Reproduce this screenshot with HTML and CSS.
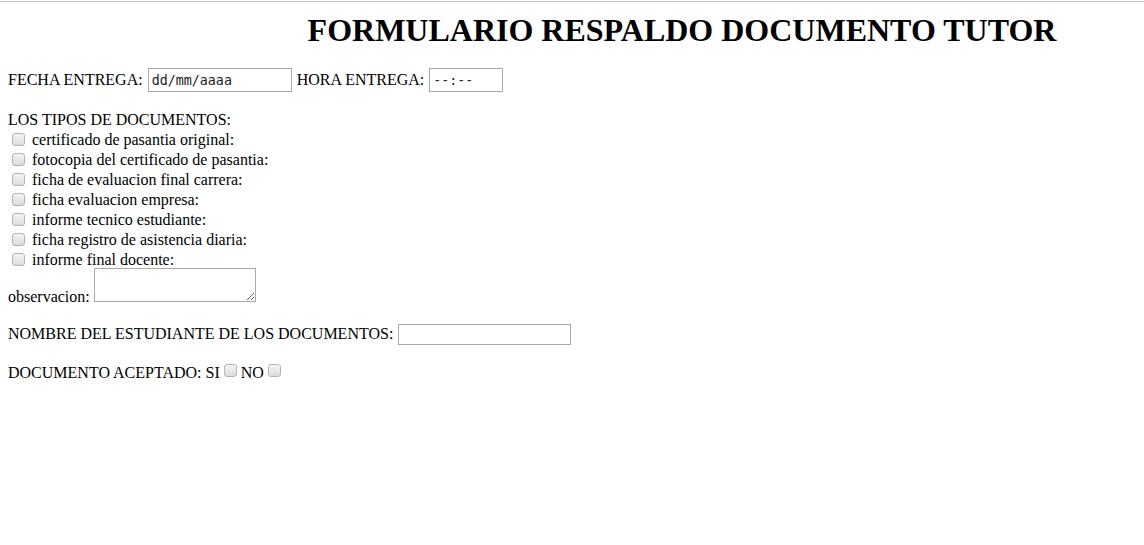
FILE: index.html
```html
<!DOCTYPE html>
<html lang="es">
<head>
<meta charset="utf-8">
<title>Formulario</title>
<link rel="stylesheet" href="styles.css">
</head>
<body>
<div class="topline"></div>
<form class="page">
<h1 class="title">FORMULARIO RESPALDO DOCUMENTO TUTOR</h1>
<p class="row first">FECHA ENTREGA: <input class="field date" type="text" placeholder="dd/mm/aaaa"> HORA ENTREGA: <input class="field time" type="text" placeholder="--:--"></p>
<div class="docs">
LOS TIPOS DE DOCUMENTOS:<br>
<input class="chk" type="checkbox"> certificado de pasantia original:<br>
<input class="chk" type="checkbox"> fotocopia del certificado de pasantia:<br>
<input class="chk" type="checkbox"> ficha de evaluacion final carrera:<br>
<input class="chk" type="checkbox"> ficha evaluacion empresa:<br>
<input class="chk" type="checkbox"> informe tecnico estudiante:<br>
<input class="chk" type="checkbox"> ficha registro de asistencia diaria:<br>
<input class="chk" type="checkbox"> informe final docente:<br>
<span class="obsline">observacion: <textarea class="obs"></textarea></span>
</div>
<p class="row name-row">NOMBRE DEL ESTUDIANTE DE LOS DOCUMENTOS: <input class="field name" type="text"></p>
<p class="row accept-row">DOCUMENTO ACEPTADO: SI <input class="chk small" type="checkbox"> NO <input class="chk small" type="checkbox"></p>
</form>
</body>
</html>
```
FILE: styles.css
```css
html, body {
  margin: 0;
  background: #fff;
}
body {
  font-family: "Liberation Serif", "Times New Roman", serif;
  font-size: 16px;
  color: #000;
}
.topline {
  height: 1px;
  margin-top: 1px;
  background: #c4c4c4;
}
.page {
  padding: 0 8px;
}
.title {
  margin: 10px 0 0;
  padding-left: 220px;
  text-align: center;
  font-size: 32px;
  font-weight: bold;
}
.row {
  margin: 18px 0;
}
.row.first {
  margin-top: 19px;
}
.row.name-row {
  margin-top: 17px;
}
.row.accept-row {
  margin-top: 19px;
}
.field {
  font: 13.33px "DejaVu Sans Mono", "Liberation Mono", monospace;
  border: 1px solid #a9a9a9;
  border-radius: 0;
  padding: 2px 3px;
  margin: 0 0 0 1px;
  height: 24px;
  box-sizing: border-box;
  vertical-align: baseline;
  background: #fff;
}
.field::placeholder {
  color: #222;
  opacity: 1;
}
.date {
  width: 144px;
  margin-right: 1px;
}
.time { width: 74px; }
.name {
  width: 173px;
  height: 21px;
  padding: 1px 2px;
}
.docs {
  line-height: 20px;
}
.chk {
  -webkit-appearance: none;
  appearance: none;
  width: 13px;
  height: 13px;
  margin: 0 3px 0 4px;
  border: 1px solid #b4b4b4;
  border-radius: 3px;
  background: linear-gradient(#f4f4f4, #dcdcdc);
  box-sizing: border-box;
  vertical-align: -1px;
}
.small {
  margin: 0;
  vertical-align: 1px;
}
.obsline {
  display: inline-block;
  margin-top: -2px;
  line-height: normal;
}
.obs {
  width: 162px;
  height: 34px;
  box-sizing: border-box;
  border: 1px solid #a9a9a9;
  border-radius: 0;
  font: 13.33px "DejaVu Sans Mono", monospace;
  vertical-align: baseline;
  margin: 0;
}
```
